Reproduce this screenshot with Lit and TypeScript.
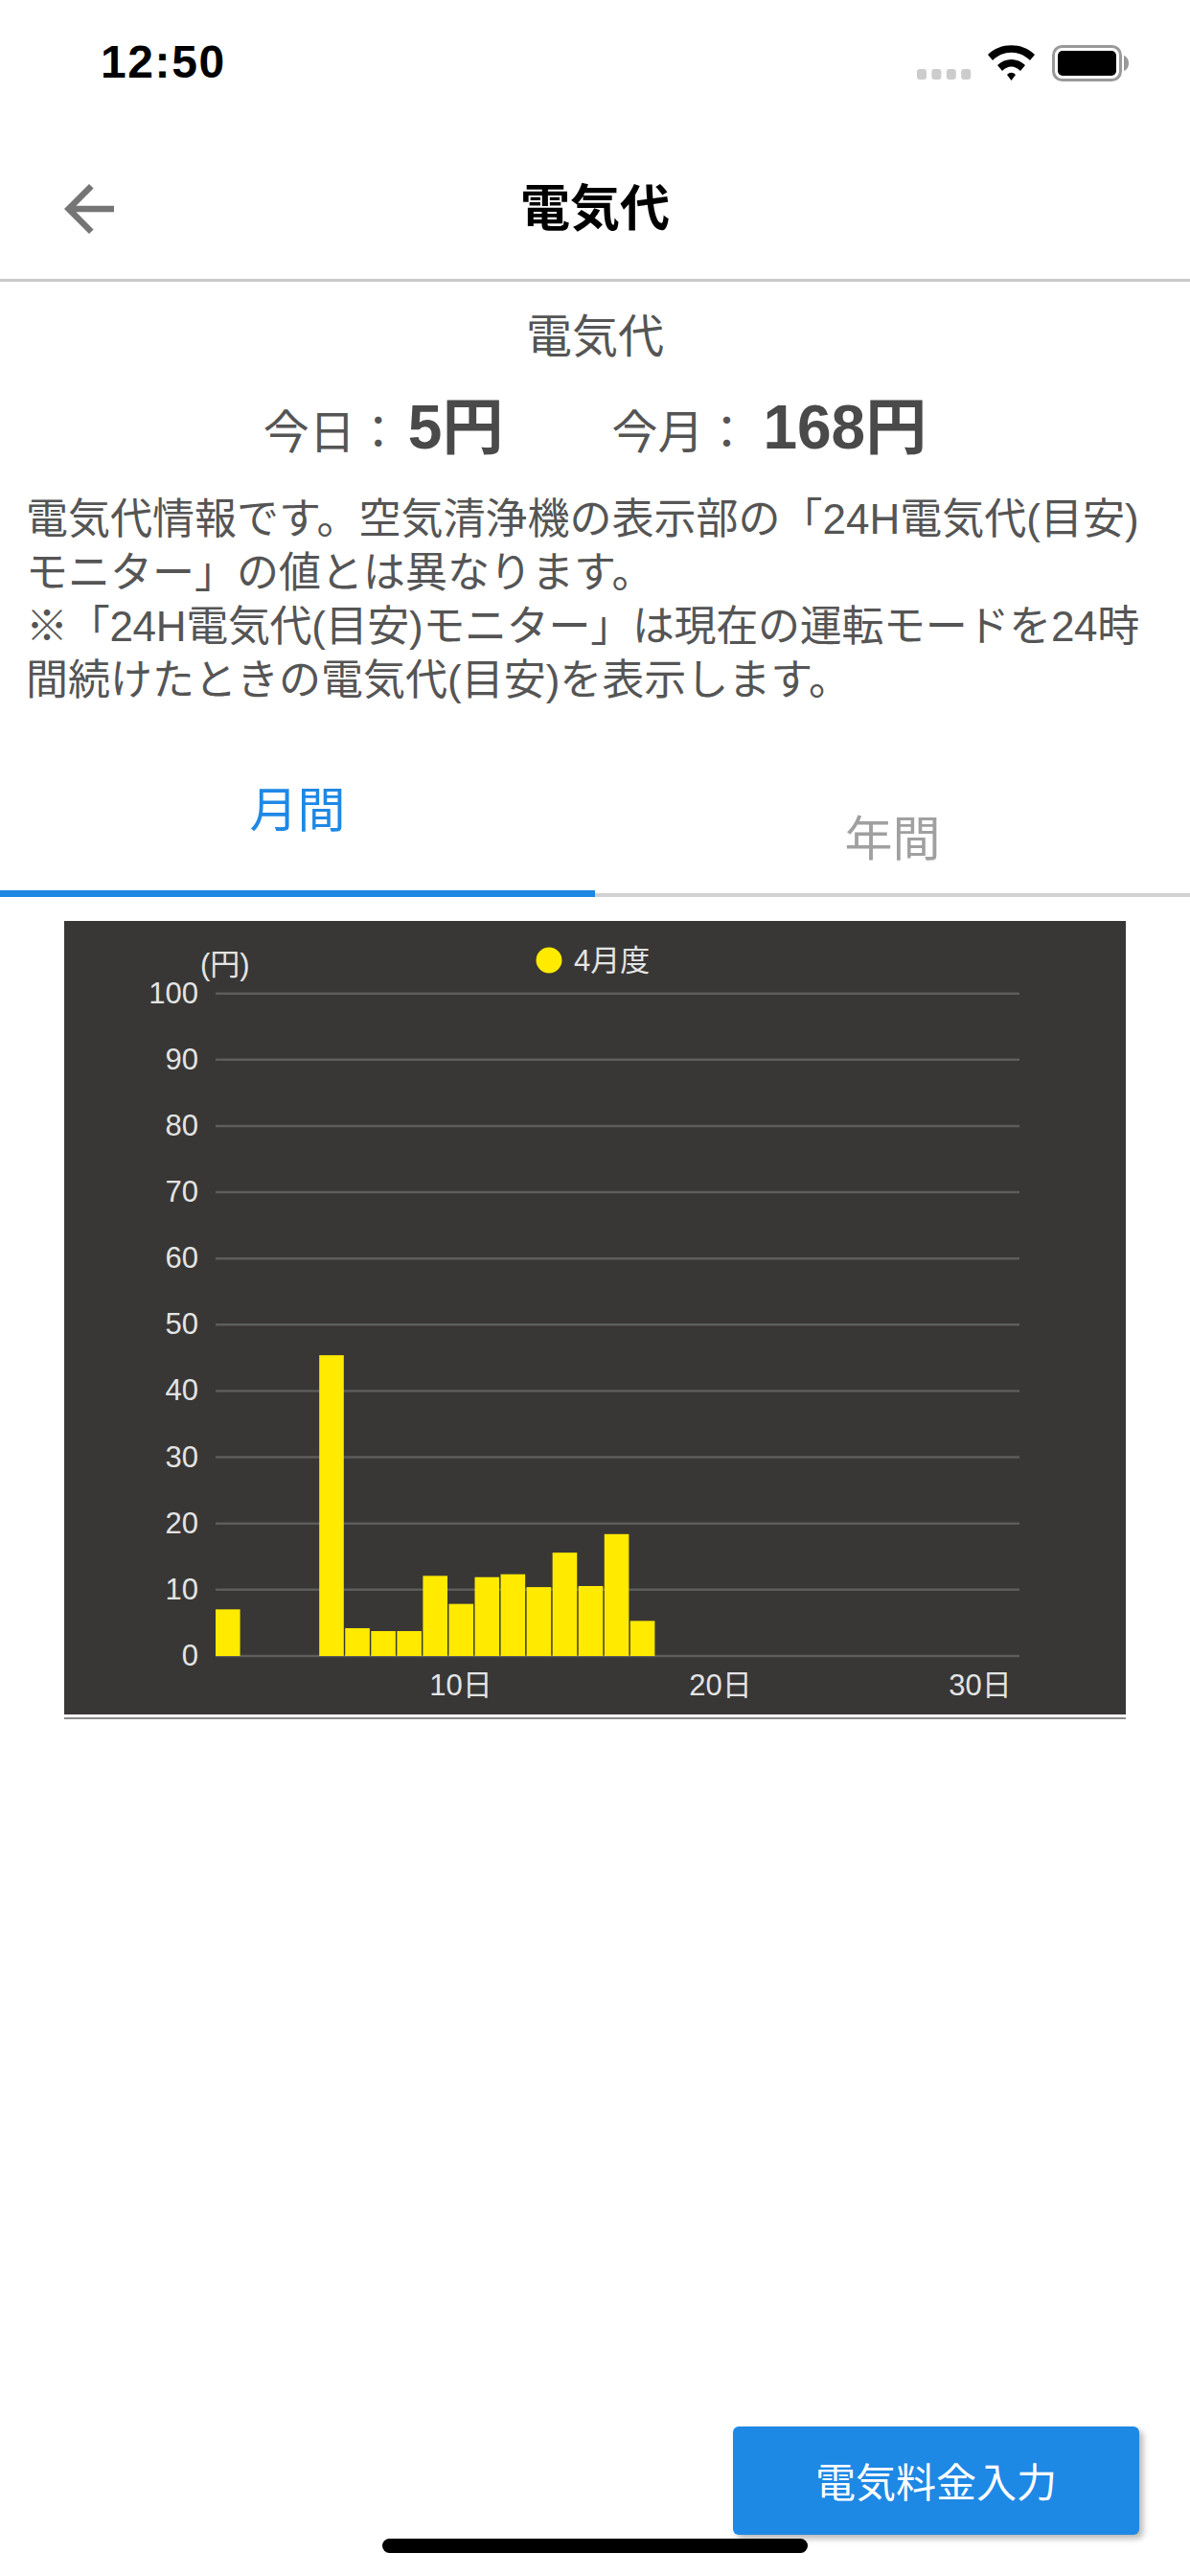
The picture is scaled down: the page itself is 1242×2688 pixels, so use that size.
import { LitElement, html, svg, css } from "lit";
import { customElement } from "lit/decorators.js";

const BARS: [number, number][] = [
  [1, 7.04], [5, 45.4], [6, 4.2], [7, 3.76], [8, 3.76], [9, 12.1], [10, 7.86], [11, 11.9],
  [12, 12.34], [13, 10.4], [14, 15.6], [15, 10.56], [16, 18.4], [17, 5.3],
];
const CX = 158, PITCH = 27.05, BASE = 767, STEP = 69.13;

@customElement("app-root")
export class AppRoot extends LitElement {
  static styles = css`
    :host {
      display: block; position: relative; width: 1242px; height: 2688px; overflow: hidden;
      background: #fff; color: #555;
      font-family: "Liberation Sans", "Noto Sans CJK JP", sans-serif;
    }
    .status { height: 120px; display: flex; justify-content: space-between; padding: 43px 63px 0 105px; box-sizing: border-box; }
    .time { font-size: 48px; line-height: 44px; font-weight: 700; color: #000; letter-spacing: 1.6px; }
    .status svg { display: block; }
    .nav { height: 174px; box-sizing: border-box; border-bottom: 3px solid #c9c9c9; display: flex; align-items: center; justify-content: center; position: relative; padding-top: 25px; }
    .back { position: absolute; left: 54px; top: 59px; }
    .navtitle { font-size: 52px; font-weight: 700; color: #000; line-height: 60px; }
    .sub { text-align: center; font-size: 48px; line-height: 60px; margin-top: 28px; }
    .summary { display: flex; justify-content: center; align-items: baseline; gap: 113px; margin-top: 28px; height: 72px; line-height: 72px; font-size: 48px; }
    .summary b { font-size: 64px; margin-left: 7px; color: #4a4a4a; }
    .summary b.wide { margin-left: 14px; }
    .desc { margin: 32px 0 0; padding: 0 27px; font-size: 44px; line-height: 56px; height: 224px; white-space: nowrap; }
    .tight { letter-spacing: -0.3px; }
    .tabs { display: grid; grid-template-columns: 1fr 1fr; height: 146px; margin-top: 52px; }
    .tab { position: relative; font-size: 50px; text-align: center; box-sizing: border-box; }
    .tab.on { color: #1e88e5; border-bottom: 7px solid #1e88e5; padding-top: 25px; line-height: 62px; }
    .tab.off { color: #a0a0a0; border-bottom: 4px solid #d2d2d2; padding-top: 55px; line-height: 62px; }
    .chart { margin: 25px 67px 0; height: 828px; background: #383735; }
    .chart svg { display: block; }
    .rule { margin: 3px 67px 0; height: 2px; background: #8a8a8a; }
    .cta { position: absolute; left: 765px; top: 2532px; width: 424px; height: 113px; background: #1e88e5; color: #fff; border: 0; border-radius: 6px; font: inherit; font-size: 42px; box-shadow: 4px 4px 6px rgba(0,0,0,.28); display: flex; align-items: center; justify-content: center; padding: 0 0 3px; }
    .home { position: absolute; left: 399px; top: 2649px; width: 444px; height: 15px; border-radius: 8px; background: #000; }
    text { font-family: "Liberation Sans", "Noto Sans CJK JP", sans-serif; font-size: 31px; fill: #e4e4e4; }
  `;

  render() {
    const ticks = Array.from({ length: 11 }, (_, i) => i * 10);
    return html`
      <div class="status">
        <div class="time">12:50</div>
        <svg width="222" height="42" viewBox="0 0 222 42">
          ${[0, 15.4, 30.8, 46.2].map((d) => svg`<rect x=${d} y="29" width="10" height="11" rx="3" fill="#ccc"></rect>`)}
          <path d="M74 14C87 1 110 1 123 14L118 20C107 9 90 9 79 20Z" fill="#000"></path>
          <path d="M84 25C92 17 105 17 113 25L108 31C102 25 95 25 89 31Z" fill="#000"></path>
          <path d="M94 35C97 32 100 32 103 35L98.5 41Z" fill="#000"></path>
          <rect x="142.5" y="5.5" width="70" height="35" rx="9" fill="none" stroke="#999" stroke-width="3"></rect>
          <rect x="147" y="10" width="61" height="26" rx="5" fill="#000"></rect>
          <path d="M216 15C219 16 221 19 221 23C221 27 219 30 216 31Z" fill="#999"></path>
        </svg>
      </div>
      <div class="nav">
        <svg class="back" width="78" height="78" viewBox="0 0 24 24"><path fill="#757575" d="M20 11H7.83l5.59-5.59L12 4l-8 8 8 8 1.41-1.41L7.83 13H20v-2z"></path></svg>
        <div class="navtitle">電気代</div>
      </div>
      <div class="sub">電気代</div>
      <div class="summary">
        <span>今日：<b>5円</b></span>
        <span>今月：<b class="wide">168円</b></span>
      </div>
      <p class="desc">電気代情報です。空気清浄機の表示部の「24H電気代(目安)<br>モニター」の値とは異なります。<br><span class="tight">※「24H電気代(目安)モニター」は現在の運転モードを24時</span><br>間続けたときの電気代(目安)を表示します。</p>
      <div class="tabs">
        <div class="tab on">月間</div>
        <div class="tab off">年間</div>
      </div>
      <div class="chart">
        <svg width="1108" height="828" viewBox="0 0 1108 828">
          ${ticks.map((t) => {
            const y = BASE - (t / 10) * STEP;
            return svg`
              <line x1=${CX} x2="997" y1=${y} y2=${y} stroke="#5d5d5b" stroke-width="2.5"></line>
              <text x="140" y=${y + 10} text-anchor="end">${t}</text>`;
          })}
          ${BARS.map(([d, v]) => {
            const h = (v / 10) * STEP;
            return svg`<rect x=${CX + (d - 1) * PITCH} y=${BASE - h} width="25.6" height=${h} fill="#ffea00"></rect>`;
          })}
          <text x="142" y="56">(円)</text>
          <circle cx="506" cy="41" r="13.5" fill="#ffea00"></circle>
          <text x="532" y="52">4月度</text>
          <text x="414" y="808" text-anchor="middle">10日</text>
          <text x="685" y="808" text-anchor="middle">20日</text>
          <text x="956" y="808" text-anchor="middle">30日</text>
        </svg>
      </div>
      <div class="rule"></div>
      <button class="cta">電気料金入力</button>
      <div class="home"></div>
    `;
  }
}
